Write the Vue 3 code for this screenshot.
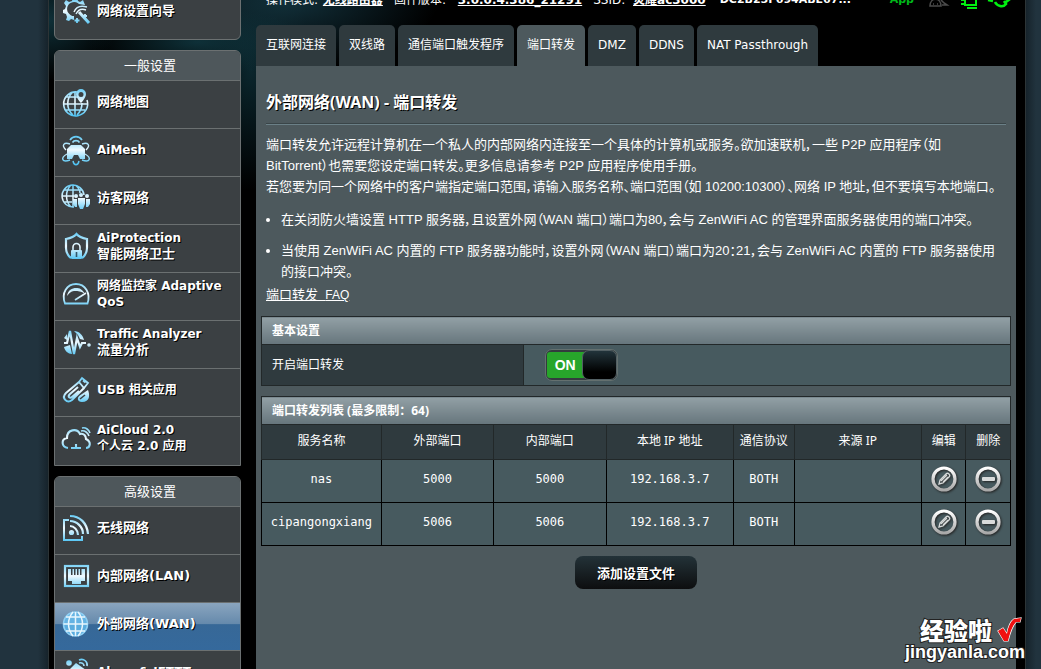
<script setup>
import { ref } from 'vue'

const generalItems = [
  { icon: 'map', lines: ['网络地图'] },
  { icon: 'mesh', lines: ['AiMesh'] },
  { icon: 'guest', lines: ['访客网络'] },
  { icon: 'shield', lines: ['AiProtection', '智能网络卫士'] },
  { icon: 'gauge', lines: ['网络监控家 Adaptive', 'QoS'] },
  { icon: 'traffic', lines: ['Traffic Analyzer', '流量分析'] },
  { icon: 'usb', lines: ['USB 相关应用'] },
  { icon: 'cloud', lines: ['AiCloud 2.0', '个人云 2.0 应用'] },
]
const advancedItems = [
  { icon: 'wifi', lines: ['无线网络'] },
  { icon: 'lan', lines: ['内部网络(LAN)'] },
  { icon: 'globe', lines: ['外部网络(WAN)'], active: true },
  { icon: 'alexa', lines: ['Alexa & IFTTT'] },
]
const panels = [
  { title: '', items: [{ icon: 'wizard', lines: ['网络设置向导'] }] },
  { title: '一般设置', items: generalItems },
  { title: '高级设置', items: advancedItems },
]
// Lines that hold Chinese without a Latin phrase are set one size larger.
const isChinese = (line) => /^[\u4e00-\u9fff]+(\(|$)/.test(line)

const tabs = ['互联网连接', '双线路', '通信端口触发程序', '端口转发', 'DMZ', 'DDNS', 'NAT Passthrough']
const activeTab = ref('端口转发')
const enabled = ref(true)
const rules = [
  { name: 'nas', ext: '5000', int: '5000', ip: '192.168.3.7', proto: 'BOTH', source: '' },
  { name: 'cipangongxiang', ext: '5006', int: '5006', ip: '192.168.3.7', proto: 'BOTH', source: '' },
]
</script>

<template>
  <div class="page">
    <svg class="defs" width="0" height="0" aria-hidden="true">
      <defs>
        <linearGradient id="ice" gradientUnits="userSpaceOnUse" x1="0" y1="0" x2="0" y2="28">
          <stop offset="0" stop-color="#5cc8f5" />
          <stop offset="0.5" stop-color="#f0faff" />
          <stop offset="1" stop-color="#4cc3f4" />
        </linearGradient>
        <linearGradient id="silver" x1="0" y1="0" x2="0" y2="1">
          <stop offset="0" stop-color="#ffffff" />
          <stop offset="1" stop-color="#a9a9a9" />
        </linearGradient>
      </defs>
    </svg>
    <div class="shell">
      <nav class="sidebar">
        <section v-for="(panel, i) in panels" :key="i" class="panel" :class="{ first: !panel.title }">
          <h2 v-if="panel.title">{{ panel.title }}</h2>
          <a v-for="item in panel.items" :key="item.icon" href="#" class="item" :class="{ active: item.active }">
            <svg class="icon" viewBox="0 0 28 28" fill="none" stroke="url(#ice)" stroke-width="1.6">
              <g v-if="item.icon === 'wizard'">
                <path d="M23 8 21 3 18 5 16 4 15 0H11L10 4 7 5 4 3 2 6 4 9 3 12 1 13V16L4 17 5 20 4 23 7 24 9 22 12 23V19A7 7 0 1 1 17 7Z" fill="url(#ice)" stroke="none" />
                <path d="M12 15C14 10 18 8 25 10M14 17C16 13 19 11 24 13" stroke-width="1.400" />
                <path d="M17 15 27 26" stroke-width="3" />
                <path d="M15 21v5M12.500 23.500h5M23 17v4M21 19h4" stroke-width="1.800" />
              </g>
              <g v-else-if="item.icon === 'map'">
                <path d="M15 4A12 12 0 1 0 25 12M1 16H25M3 9H16M3 22H23M13 4V28M11 4C4 10 4 21 11 27M15 27C19 23 20 20 20 15" />
                <path d="M19 1a5 5 0 0 0-5 5c0 4 5 9 5 9s5-5 5-9a5 5 0 0 0-5-5zm0 3a2.3 2.3 0 1 1 0 5 2.3 2.3 0 0 1 0-5z" fill="url(#ice)" stroke="none" fill-rule="evenodd" />
              </g>
              <g v-else-if="item.icon === 'mesh'">
                <path d="M8 4C11-.5 17-.5 20 4M10.500 6.500C12 4 16 4 17.500 6.500" />
                <path d="M5 23V13L9 9H19L23 13V23H18L16 19H12L10 23Z" fill="url(#ice)" stroke="none" />
                <path d="M4 14C-1 9 2 6 8 8M24 14C29 9 26 6 20 8M5 18C-2 22 0 27 8 24M23 18C30 22 28 27 20 24M11 25C12 30 16 30 17 25" stroke-width="1.400" />
              </g>
              <g v-else-if="item.icon === 'guest'">
                <path d="M22 11A11 11 0 1 0 12 23M0 12H12M2 6H20M2 18H10M11 1V23M9 1C3 7 3 17 9 23M13 1C17 4 18 6 18 9" stroke-width="1.500" />
                <g fill="url(#ice)" stroke="none">
                  <circle cx="14" cy="12" r="2" /><circle cx="19" cy="11" r="2" /><circle cx="25" cy="12" r="2" />
                  <path d="M11 15H15V23H13L11 20ZM16 14H23V20L21 25H18L16 20ZM24 15H28V20L26 23H24Z" />
                </g>
              </g>
              <g v-else-if="item.icon === 'shield'">
                <path d="M9 26C5 23 4 20 4 16V7C9 6 12 5 14.500 2 17 5 20 6 25 7V16C25 20 24 23 20 26" stroke-width="2.200" />
                <path d="M11 19V15A3.500 3.500 0 0 1 18 15V19" stroke-width="1.600" />
                <rect x="9" y="18" width="11" height="9" rx="1" fill="url(#ice)" stroke="none" />
                <path d="M14.500 20V25" stroke="#2f566a" />
              </g>
              <g v-else-if="item.icon === 'gauge'">
                <path d="M3 23.500C-1 13 5 4 14 4S29 13 25.500 23.500Z" stroke-width="1.800" />
                <path d="M5 16C6 10 10 8 14 8S20 9 23 14C19 11 16 11 13 11S8 12 5 16Z" fill="url(#ice)" stroke="none" />
                <path d="M13 20 24 13" stroke-width="1.700" />
              </g>
              <g v-else-if="item.icon === 'traffic'">
                <path d="M2 15H5L8 3 12 26 15 10 18 19 20 15H24" stroke-width="2.200" />
                <path d="M12 3C17 3 21 7 22 12L18 11 16 7ZM2 19 8 17 10 26C6 26 3 23 2 19ZM2 10 5 6 5 12Z" fill="url(#ice)" stroke="none" />
                <circle cx="27" cy="17" r="1" />
              </g>
              <g v-else-if="item.icon === 'usb'">
                <path d="M17 6 4 17C-1 22 5 28 10 24L22 12M16 11 8 18C5 21 8 23 10 21L17 15" stroke-width="2" />
                <path d="M17 6 20 2 26 7 22 12ZM21 4.500 23.500 6.500" stroke-width="1.800" />
                <path d="M26 14 20 18C14 21 15 26 20 26 28 26 28 19 26 14Z" fill="url(#ice)" stroke="none" />
                <path d="M18 23 23 19" stroke="#3b4043" />
              </g>
              <g v-else-if="item.icon === 'cloud'">
                <path d="M6 24C-1 23-1 15 5 14 5 5 15 4 18 10 22 9 24 12 24 15 30 18 28 24 24 24M9 24H19M14 20V23" stroke-width="2.100" />
                <path d="M19 7C23 6 26 9 27 12M20 4C24 3 27 6 28 9" />
              </g>
              <g v-else-if="item.icon === 'wifi'">
                <path d="M7 6H2V26H20V22" stroke-width="2" />
                <path d="M8 2C18 2 25 9 26 20M8 7C15 7 21 13 21 20M8 12C12 12 16 16 16 21" stroke-width="2.200" />
                <circle cx="9.500" cy="18.500" r="2.600" fill="url(#ice)" stroke="none" />
              </g>
              <g v-else-if="item.icon === 'lan'">
                <rect x="3" y="4" width="23" height="20" stroke-width="2.200" />
                <path d="M6 7H9V13H10.500V7H12V13H13.500V7H15V13H16.500V7H18V13H19.500V7H23V19H19V22H10V19H6Z" fill="url(#ice)" stroke="none" />
              </g>
              <g v-else-if="item.icon === 'globe'">
                <circle cx="13.500" cy="14" r="12" fill="#63bdf0" fill-opacity="0.8" stroke="#8fd0f4" />
                <path d="M1.500 14H25.500M4 7H23M4 21H23M13.500 2V26M11 2C5 9 5 19 11 26M16 2C22 9 22 19 16 26" stroke="#e8f6fd" stroke-width="1.500" />
              </g>
              <g v-else>
                <circle cx="7" cy="5" r="2.800" fill="url(#ice)" stroke="none" />
                <path d="M5 14 14 5 24 12V26H6Z" fill="url(#ice)" stroke="none" />
                <path d="M17 2C22 0 26 4 25 8M17 5C20 4 22 6 22 8" />
              </g>
            </svg>
            <span class="label"><span v-for="line in item.lines" :key="line" :class="{ zh: isChinese(line) }">{{ line }}</span></span>
          </a>
        </section>
      </nav>

      <main class="main">
        <header class="status">
          <span>操作模式: <a href="#">无线路由器</a></span>
          <span class="firmware">固件版本: <a href="#">3.0.0.4.386_21291</a></span>
          <span class="network">SSID: <a href="#">荧耀ac3000</a></span>
          <b class="ssid">DC2B25F694ABE67...</b>
          <a class="app" href="#">App</a>
          <svg class="tray" viewBox="0 -7 84 16" fill="none">
            <path d="M3 6C3-3 14-3 14 6ZM14 0 17 3 20 5H15M6 4H7M10 4H11" stroke="#4b4b4b" stroke-width="1.600" />
            <path d="M38-7V5H49V-7M40 8H50M34 0H37M34 4H37" stroke="#00f010" stroke-width="2" />
            <path d="M61 0 66 1M68 2C70 6 76 8 79 4L77 1M79 2 83-1" stroke="#00f010" stroke-width="2.600" />
          </svg>
        </header>

        <div class="tabs" role="tablist">
          <button v-for="tab in tabs" :key="tab" type="button" role="tab" :aria-selected="tab === activeTab" :class="{ on: tab === activeTab }" @click="activeTab = tab">{{ tab }}</button>
        </div>

        <div class="content">
          <div class="intro">
            <h1>外部网络(WAN) - 端口转发</h1>
            <p>端口转发允许远程计算机在一个私人的内部网络内连接至一个具体的计算机或服务。欲加速联机，一些 P2P 应用程序（如 BitTorrent）也需要您设定端口转发。更多信息请参考 P2P 应用程序使用手册。<br>若您要为同一个网络中的客户端指定端口范围，请输入服务名称、端口范围（如 10200:10300）、网络 IP 地址，但不要填写本地端口。</p>
            <ul>
              <li>在关闭防火墙设置 HTTP 服务器，且设置外网（WAN 端口）端口为80，会与 ZenWiFi AC 的管理界面服务器使用的端口冲突。</li>
              <li>当使用 ZenWiFi AC 内置的 FTP 服务器功能时，设置外网（WAN 端口）端口为20：21，会与 ZenWiFi AC 内置的 FTP 服务器使用的接口冲突。</li>
            </ul>
            <a class="faq" href="#">端口转发&nbsp; <small>FAQ</small></a>
          </div>

          <table class="form">
            <colgroup><col class="c35"><col></colgroup>
            <thead><tr><th colspan="2">基本设置</th></tr></thead>
            <tbody>
              <tr>
                <th scope="row"><label for="forwarding">开启端口转发</label></th>
                <td>
                  <label class="toggle" :class="{ off: !enabled }">
                    <input id="forwarding" v-model="enabled" type="checkbox">
                    <span class="state">{{ enabled ? 'ON' : 'OFF' }}</span>
                    <span class="knob"></span>
                  </label>
                </td>
              </tr>
            </tbody>
          </table>

          <table class="list">
            <colgroup><col class="c16"><col class="c15"><col class="c15"><col class="c17"><col class="proto"><col class="c17"><col class="action"><col class="action"></colgroup>
            <thead>
              <tr><th colspan="8">端口转发列表 (最多限制：64)</th></tr>
              <tr class="cols"><th>服务名称</th><th>外部端口</th><th>内部端口</th><th>本地 IP 地址</th><th>通信协议</th><th>来源 IP</th><th>编辑</th><th>删除</th></tr>
            </thead>
            <tbody>
              <tr v-for="rule in rules" :key="rule.name">
                <td>{{ rule.name }}</td><td>{{ rule.ext }}</td><td>{{ rule.int }}</td><td>{{ rule.ip }}</td><td>{{ rule.proto }}</td><td>{{ rule.source }}</td>
                <td>
                  <button type="button" class="round" aria-label="编辑">
                    <svg viewBox="0 0 26 26" fill="none">
                      <circle cx="13" cy="13" r="11" stroke="url(#silver)" stroke-width="3.200" />
                      <path d="M8 18 9 14 15 8C17 6 20 9 18 11L12 17ZM10 15 16 9M12 16 17 11" stroke="#d5d8d8" stroke-width="1.300" />
                    </svg>
                  </button>
                </td>
                <td>
                  <button type="button" class="round" aria-label="删除">
                    <svg viewBox="0 0 26 26" fill="none">
                      <circle cx="13" cy="13" r="11" stroke="url(#silver)" stroke-width="3.200" />
                      <rect x="7" y="11" width="13" height="4" rx="1" fill="#d9dbdb" />
                    </svg>
                  </button>
                </td>
              </tr>
            </tbody>
          </table>
          <button type="button" class="add">添加设置文件</button>
        </div>
      </main>
    </div>

    <div class="watermark">
      <div class="brand">经验啦<svg viewBox="0 0 26 26"><path d="M2 14 7 11 11 17C12 10 15 4 18 2L25 1 24 5 20 5C16 9 14 16 12 24L8 24Z" fill="#f01010" stroke="#fff" stroke-width="1.200" /></svg></div>
      <div class="site">jingyanla.com</div>
    </div>
  </div>
</template>

<style>
body {
  background: #21333e;
}
</style>

<style scoped>
.page {
  position: relative;
  height: 100vh;
  overflow: hidden;
  padding: 0 15px 0 48px;
  background: linear-gradient(90deg, #21333e 38px, #16232b 48px, #16232b calc(100% - 15px), #21333e calc(100% - 5px));
  color: #fff;
  font: 12px/16px "Noto Sans", "Noto Sans CJK SC", sans-serif;
}
.page, .page * { box-sizing: border-box; }
.defs { position: absolute; }
.shell {
  display: flex;
  align-items: flex-start;
  gap: 15px;
  min-height: 100%;
  padding: 0 10px 0 6px;
  background:
    radial-gradient(ellipse 110px 34px at 150px 42px, #0e3038, transparent),
    radial-gradient(ellipse 150px 70px at 240px 0, #12303a, transparent),
    radial-gradient(ellipse 60px 120px at 203px 70px, #0b262d, transparent),
    radial-gradient(ellipse 70px 60px at 0 20px, #0f3038, transparent),
    #000;
  box-shadow: inset 1px 0 #2c3436, inset -1px 0 #2c3436;
}
a { color: inherit; }
.sidebar { flex: none; width: 187px; margin-top: -11px; }
.panel {
  margin-bottom: 10px;
  padding-bottom: 1px;
  border: 1px solid #6b7071;
  border-radius: 6px 6px 0 0;
  background: #3b4043;
  overflow: hidden;
}
.panel.first { border-radius: 0 0 6px 6px; }
.panel.first .item { border-top: 0; }
.panel h2 {
  margin: 0;
  padding-left: 5px;
  background: #4e575b;
  font-size: 13px;
  font-weight: 400;
  line-height: 29px;
  text-align: center;
}
.item {
  display: flex;
  align-items: center;
  gap: 7px;
  height: 48px;
  padding: 0 4px 6px 7px;
  border-top: 1px solid #6b7071;
  font: bold 12px/16px "DejaVu Sans", "Noto Sans CJK SC", sans-serif;
  text-decoration: none;
  text-shadow: 1px 1px 0 #000;
}
.item.active { background: linear-gradient(#8aa5bf, #668aac 44%, #376897 46%, #35699c); }
.icon { flex: none; width: 28px; height: 28px; overflow: visible; }
.label span { display: block; white-space: nowrap; }
.label .zh { font-size: 13px; }

.main { flex: 1; min-width: 0; }
.status {
  display: flex;
  align-items: flex-end;
  gap: 11px;
  height: 43px;
  margin-top: -18px;
  padding: 0 0 18px 10px;
  font: 12px/14px "DejaVu Sans", "Noto Sans CJK SC", sans-serif;
  white-space: nowrap;
}
.status span a { margin-left: 1px; font-weight: bold; }
.status .firmware a { margin-left: 8px; }
.status .network a { margin-left: 4px; }
.status .ssid { margin-left: 3px; font-size: 11px; }
.status .app { margin-left: auto; color: #00b71a; font-size: 11px; font-weight: bold; text-decoration: none; }
.tray { flex: none; width: 84px; height: 16px; margin: 0 5px -2px 2px; }
.tabs { display: flex; gap: 3px; }
.tabs button {
  height: 41px;
  padding: 0 10px 2px;
  border: 0;
  border-radius: 5px 5px 0 0;
  background: #2f3a3e;
  color: #fff;
  font: 12px/16px "DejaVu Sans", "Noto Sans CJK SC", sans-serif;
  white-space: nowrap;
}
.tabs button.on { background: #4d595d; }

.content { min-height: 603px; padding: 24px 5px 0; background: #4d595d; }
.intro {
  padding: 0 5px 10px;
  font: 13px/21px "Liberation Sans", "Noto Sans CJK SC", sans-serif;
  font-feature-settings: "palt";
}
h1 {
  margin: 0 0 9px;
  padding-bottom: 10px;
  border-bottom: 1px solid #6b8087;
  box-shadow: inset 0 -1px #3a4548;
  font: bold 16px/24px "Noto Sans", "Noto Sans CJK SC", sans-serif;
  text-shadow: 1px 1px 0 #000;
}
p { margin: 0 0 12px; }
ul { margin: 0; padding-left: 15px; }
li + li { margin-top: 10px; }
.faq { display: block; width: max-content; margin-top: 2px; }
.faq small { font-size: 12px; }

table { width: 100%; border-collapse: collapse; table-layout: fixed; margin-bottom: 10px; }
thead tr:first-child th {
  height: 28px;
  padding: 0 10px;
  border: 1px solid #222829;
  background: linear-gradient(#92a0a5, #66757c);
  font-size: 12px;
  font-weight: 700;
  text-align: left;
}
.form tbody th {
  height: 41px;
  padding: 0 10px 1px;
  border: 1px solid #222829;
  background: #2f3a3e;
  font-weight: 400;
  text-align: left;
}
.form td { padding: 0 0 0 21px; border: 1px solid #222829; background: #475a5f; }
.toggle {
  position: relative;
  display: flex;
  width: 73px;
  height: 32px;
  padding: 1px;
  border: 1px solid #64706f;
  border-radius: 7px;
  background: #333b3e;
}
.toggle input { position: absolute; inset: 0; width: 100%; height: 100%; margin: 0; opacity: 0; }
.state {
  flex: 1;
  margin: 1px -4px 1px 0;
  padding-right: 4px;
  border-radius: 3px;
  background: #27a52b;
  font: bold 14px/26px "Liberation Sans", sans-serif;
  text-align: center;
}
.toggle.off .state { order: 2; background: #555; }
.knob { z-index: 1; width: 35px; margin: -1px; border: 1px solid #536064; border-radius: 7px; background: linear-gradient(#22343b, #000 75%); }

.c35 { width: 35%; }
.c16 { width: 16%; }
.c15 { width: 15%; }
.c17 { width: 17%; }
.proto { width: 60px; }
.action { width: 44px; }
.list .cols th { height: 35px; padding: 0 0 3px; border: 1px solid #222829; background: #2f3a3e; font-weight: 400; }
.list td {
  height: 43px;
  padding: 0 0 4px;
  border: 1px solid #000;
  background: #475a5f;
  font-family: "DejaVu Sans Mono", monospace;
  text-align: center;
}
.round { display: block; width: 26px; height: 26px; margin: 0 auto; padding: 0; border: 0; background: none; }
.round svg { display: block; width: 26px; height: 26px; filter: drop-shadow(1px 1px 1px #222); }
.add {
  display: block;
  min-width: 122px;
  height: 33px;
  margin: 0 auto;
  padding: 0 20px;
  border: 0;
  border-radius: 8px;
  background: linear-gradient(#233238, #0d0e0f);
  color: #fff;
  font: bold 13px/16px "Noto Sans", "Noto Sans CJK SC", sans-serif;
  text-shadow: 1px 1px 0 #000;
}
.watermark {
  position: absolute;
  right: 16px;
  bottom: 8px;
  color: #fff;
  -webkit-text-stroke: 2px #222;
  paint-order: stroke fill;
  text-align: right;
}
.brand { display: flex; justify-content: flex-end; gap: 4px; padding-right: 3px; font: 900 24px/26px "Noto Sans CJK SC", sans-serif; }
.brand svg { width: 26px; height: 26px; }
.site { font: bold 18px/18px "Liberation Sans", sans-serif; }
</style>
